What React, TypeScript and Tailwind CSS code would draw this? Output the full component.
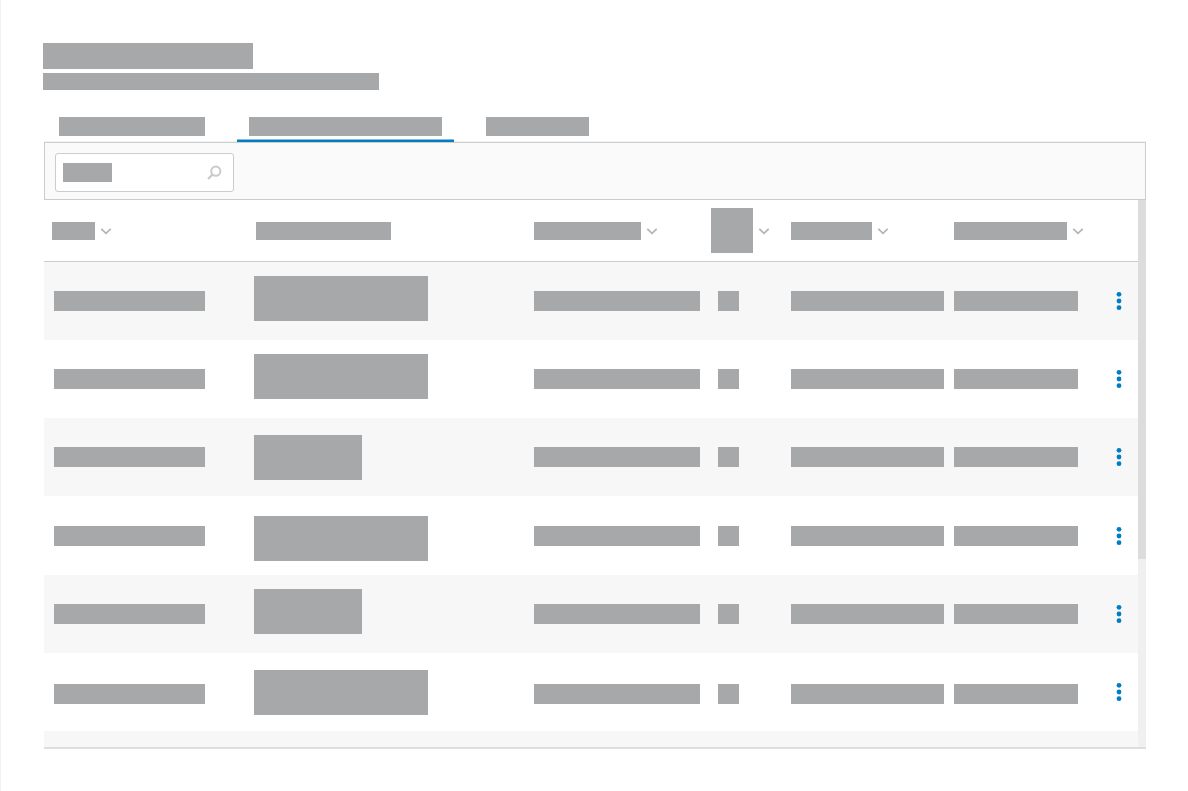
import clsx from "clsx";

type Align = "start" | "center" | "end";

interface Row {
  id: number;
  blockWidth: string;
  blockAlign: Align;
  barAlign: Align;
}

const rows: Row[] = [
  { id: 1, blockWidth: "w-[174px]", blockAlign: "start", barAlign: "center" },
  { id: 2, blockWidth: "w-[174px]", blockAlign: "start", barAlign: "center" },
  { id: 3, blockWidth: "w-[108px]", blockAlign: "center", barAlign: "center" },
  { id: 4, blockWidth: "w-[174px]", blockAlign: "end", barAlign: "center" },
  { id: 5, blockWidth: "w-[108px]", blockAlign: "start", barAlign: "center" },
  { id: 6, blockWidth: "w-[174px]", blockAlign: "center", barAlign: "end" },
];

const alignClasses: Record<Align, string> = {
  start: "items-start",
  center: "items-center",
  end: "items-end",
};

const columns = [
  { id: "first", bar: "w-[43px] h-[18px]", pad: "pl-2", sortable: true },
  { id: "second", bar: "w-[135px] h-[18px]", pad: "pl-3", sortable: false },
  { id: "third", bar: "w-[107px] h-[18px]", pad: "pl-2.5", sortable: true },
  { id: "fourth", bar: "w-[42px] h-[45px]", pad: "pl-[3px]", sortable: true },
  { id: "fifth", bar: "w-[81px] h-[18px]", pad: "pl-2.5", sortable: true },
  { id: "sixth", bar: "w-[113px] h-[18px]", pad: "pl-2.5", sortable: true },
];

const tabs = [
  { id: "one", width: "w-[146px]", active: false },
  { id: "two", width: "w-[193px]", active: true },
  { id: "three", width: "w-[103px]", active: false },
];

function Bar({ className }: { className?: string }) {
  return <span className={clsx("block shrink-0 bg-[#a7a8aa]", className)} />;
}

function ChevronIcon() {
  return (
    <svg width="12" height="8" viewBox="0 0 12 8" fill="none" aria-hidden="true">
      <path d="M1.3 1.8 6 6.3l4.7-4.5" stroke="#b4b4b4" strokeWidth="1.7" />
    </svg>
  );
}

function SearchIcon() {
  return (
    <svg width="16" height="16" viewBox="0 0 16 16" fill="none" aria-hidden="true">
      <circle cx="8.8" cy="6.2" r="4.6" stroke="#cacaca" strokeWidth="2" />
      <path d="M5.6 9.4 1 14" stroke="#cacaca" strokeWidth="2.2" />
    </svg>
  );
}

function MoreIcon() {
  return (
    <svg width="6" height="20" viewBox="0 0 6 20" fill="#007dc3" aria-hidden="true">
      <circle cx="3" cy="3.3" r="2.4" />
      <circle cx="3" cy="10" r="2.4" />
      <circle cx="3" cy="16.7" r="2.4" />
    </svg>
  );
}

function BarCell({ align, width }: { align: Align; width: string }) {
  return (
    <td className="p-0 pl-2.5">
      <div className={clsx("flex h-6", alignClasses[align])}>
        <Bar className={clsx("h-5", width)} />
      </div>
    </td>
  );
}

function Tabs() {
  return (
    <div
      role="tablist"
      className="mt-[27px] ml-px flex gap-5 pl-[3px] shadow-[inset_0_-1px_0_#f2f2f2]"
    >
      {tabs.map((tab) => (
        <button
          key={tab.id}
          type="button"
          role="tab"
          aria-label={`Tab ${tab.id}`}
          aria-selected={tab.active}
          className={clsx("flex flex-col", tab.active && "bg-white")}
        >
          <Bar className={clsx("mx-3 mb-[3px] h-[19px]", tab.width)} />
          {tab.active && (
            <span className="block h-[3px] w-full border-t border-[#7fbde1] bg-[#007dc3]" />
          )}
        </button>
      ))}
    </div>
  );
}

function Toolbar() {
  return (
    <div className="ml-px border border-[#cccccc] bg-[#fafafa] pt-2.5 pb-[7px] pl-2.5">
      <div className="relative w-[179px]">
        <input
          type="search"
          aria-label="Search"
          className="block h-[39px] w-full rounded-[3px] border border-[#cccccc] bg-white px-2 text-sm outline-none"
        />
        <div className="pointer-events-none absolute inset-0 flex items-center justify-between pr-[11px] pl-2">
          <Bar className="h-[19px] w-[49px]" />
          <SearchIcon />
        </div>
      </div>
    </div>
  );
}

function DataTable() {
  return (
    <div className="ml-px flex border-b-2 border-[#dedede]">
      <table className="min-w-0 flex-1 table-fixed border-separate border-spacing-0">
        <colgroup>
          <col className="w-[200px]" />
          <col />
          <col className="w-[184px]" />
          <col className="w-[73px]" />
          <col className="w-[163px]" />
          <col className="w-[156px]" />
          <col className="w-[38px]" />
        </colgroup>
        <thead>
          <tr className="h-[62px]">
            {columns.map((column) => (
              <th
                key={column.id}
                scope="col"
                aria-label={`Column ${column.id}`}
                className={clsx("border-b border-[#cccccc] p-0", column.pad)}
              >
                <div className="flex items-center gap-[5px]">
                  <Bar className={column.bar} />
                  {column.sortable && (
                    <button type="button" aria-label={`Sort by ${column.id}`}>
                      <ChevronIcon />
                    </button>
                  )}
                </div>
              </th>
            ))}
            <th
              scope="col"
              aria-label="Actions"
              className="border-b border-[#cccccc] p-0"
            />
          </tr>
        </thead>
        <tbody>
          {rows.map((row) => (
            <tr key={row.id} className="h-[78px] odd:bg-[#f7f7f7] nth-4:h-[79px]">
              <BarCell align={row.barAlign} width="w-[151px]" />
              <td className="p-0 pl-2.5">
                <div className={clsx("flex h-[50px]", alignClasses[row.blockAlign])}>
                  <Bar className={clsx("h-[45px]", row.blockWidth)} />
                </div>
              </td>
              <BarCell align={row.barAlign} width="w-[166px]" />
              <BarCell align={row.barAlign} width="w-[21px]" />
              <BarCell align={row.barAlign} width="w-[153px]" />
              <BarCell align={row.barAlign} width="w-[124px]" />
              <td className="p-0">
                <button
                  type="button"
                  aria-label={`Row ${row.id} actions`}
                  className="flex w-full items-center justify-center"
                >
                  <MoreIcon />
                </button>
              </td>
            </tr>
          ))}
          {/* next row peeking in above the bottom edge */}
          <tr className="h-4 bg-[#f7f7f7]">
            <td colSpan={7} className="p-0" />
          </tr>
        </tbody>
      </table>
      <div className="w-2 shrink-0 bg-[#f0f0f0]">
        <div className="h-[359px] bg-[#dcdcdc]" />
      </div>
    </div>
  );
}

export default function App() {
  return (
    <main className="min-h-screen border-l border-[#f2f2f2] bg-white px-[42px] pt-[43px] font-['Open_Sans',sans-serif]">
      <h1 aria-label="Title">
        <Bar className="h-[26px] w-[210px]" />
      </h1>
      <p className="mt-1">
        <Bar className="h-[17px] w-[336px]" />
      </p>
      <Tabs />
      <Toolbar />
      <DataTable />
    </main>
  );
}
